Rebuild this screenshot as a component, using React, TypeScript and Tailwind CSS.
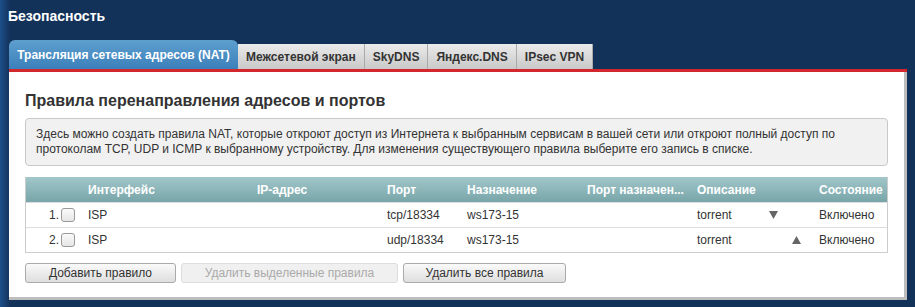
import { useState } from "react";

interface Rule {
  iface: string;
  ip: string;
  port: string;
  dest: string;
  destPort: string;
  descr: string;
  move: "down" | "up";
  state: string;
}

const rules: Rule[] = [
  { iface: "ISP", ip: "", port: "tcp/18334", dest: "ws173-15", destPort: "", descr: "torrent", move: "down", state: "Включено" },
  { iface: "ISP", ip: "", port: "udp/18334", dest: "ws173-15", destPort: "", descr: "torrent", move: "up", state: "Включено" },
];

const tabs = ["Межсетевой экран", "SkyDNS", "Яндекс.DNS", "IPsec VPN"];

const Arrow = ({ dir }: { dir: "down" | "up" }) => (
  <svg width="9" height="8" viewBox="0 0 9 8" className="fill-[#666]">
    {dir === "down" ? <path d="M0 0h9L4.5 8z" /> : <path d="M0 8h9L4.5 0z" />}
  </svg>
);

const RuleRow = ({ rule, index }: { rule: Rule; index: number }) => {
  const [checked, setChecked] = useState(false);
  return (
    <div className="flex h-[25px] items-center border-t border-[#ddd] text-[12px] text-[#333]">
      <div className="flex w-[62px] items-center justify-end gap-[2px] pr-[13px]">
        <span>{index}.</span>
        <button
          onClick={() => setChecked(!checked)}
          className="h-[14px] w-[14px] rounded-[3px] border border-[#999] bg-gradient-to-b from-[#fafafa] to-[#e6e6e6]"
        />
      </div>
      <div className="w-[169px]">{rule.iface}</div>
      <div className="w-[130px]">{rule.ip}</div>
      <div className="w-[80px]">{rule.port}</div>
      <div className="w-[120px]">{rule.dest}</div>
      <div className="w-[110px]">{rule.destPort}</div>
      <div className="w-[68px]">{rule.descr}</div>
      <div className="flex w-[54px] pl-[4px]">
        {rule.move === "down" ? (
          <Arrow dir="down" />
        ) : (
          <span className="pl-[23px]">
            <Arrow dir="up" />
          </span>
        )}
      </div>
      <div>{rule.state}</div>
    </div>
  );
};

export default function App() {
  return (
    <div className="h-[307px] w-[915px] overflow-hidden bg-[linear-gradient(to_right,#1d4f8a_0px,#13325a_10px)] font-['Liberation_Sans',Arial,sans-serif]">
      <h1 className="px-[8px] pt-[6px] text-[14px] font-bold text-white">Безопасность</h1>

      <div className="ml-[9px] mt-[13px] flex h-[29px] items-end">
        <div className="flex h-[29px] w-[229px] items-center justify-center rounded-t-[6px] bg-gradient-to-b from-[#5e9fce] to-[#3b80bb] text-[12px] font-bold text-white">
          Трансляция сетевых адресов (NAT)
        </div>
        {tabs.map((t) => (
          <div
            key={t}
            className="flex h-[25px] items-center border-r border-[#aaa] bg-gradient-to-b from-[#ebebeb] to-[#c9c9c9] px-[8px] text-[12px] font-bold text-[#333]"
          >
            {t}
          </div>
        ))}
      </div>

      <div className="ml-[9px] mr-[8px] h-[3px] bg-[#d2272c]" />
      <div className="ml-[9px] mr-[8px] border-b-[3px] border-r-[3px] border-[#bdbdbd] bg-white pb-[14px]">
        <h2 className="px-[16px] pt-[17px] text-[16px] font-bold text-[#333]">
          Правила перенаправления адресов и портов
        </h2>

        <div className="mx-[16px] mt-[5px] rounded-[4px] border border-[#c8c8c8] bg-[#f1f1f1] px-[10px] py-[8px] text-[12px] leading-[15px] text-[#333]">
          Здесь можно создать правила NAT, которые откроют доступ из Интернета к выбранным сервисам в вашей сети или откроют полный доступ по
          протоколам TCP, UDP и ICMP к выбранному устройству. Для изменения существующего правила выберите его запись в списке.
        </div>

        <div className="mx-[16px] mt-[11px] border border-t-0 border-[#ccc]">
          <div className="flex h-[25px] items-center bg-gradient-to-b from-[#a1c7ca] to-[#78a5a9] text-[12px] font-bold text-white">
            <div className="w-[62px]" />
            <div className="w-[169px]">Интерфейс</div>
            <div className="w-[130px]">IP-адрес</div>
            <div className="w-[80px]">Порт</div>
            <div className="w-[120px]">Назначение</div>
            <div className="w-[110px]">Порт назначен...</div>
            <div className="w-[122px]">Описание</div>
            <div>Состояние</div>
          </div>
          {rules.map((r, i) => (
            <RuleRow key={i} rule={r} index={i + 1} />
          ))}
        </div>

        <div className="mx-[16px] mt-[10px] flex gap-[5px] text-[12px]">
          <button className="h-[20px] w-[151px] rounded-[3px] border border-[#aaa] bg-gradient-to-b from-[#fafafa] to-[#dedede] text-[#333]">
            Добавить правило
          </button>
          <button
            disabled
            className="h-[20px] w-[217px] rounded-[3px] border border-[#ddd] bg-[#f0f0f0] text-[#aaa]"
          >
            Удалить выделенные правила
          </button>
          <button className="h-[20px] w-[163px] rounded-[3px] border border-[#aaa] bg-gradient-to-b from-[#fafafa] to-[#dedede] text-[#333]">
            Удалить все правила
          </button>
        </div>
      </div>
    </div>
  );
}
